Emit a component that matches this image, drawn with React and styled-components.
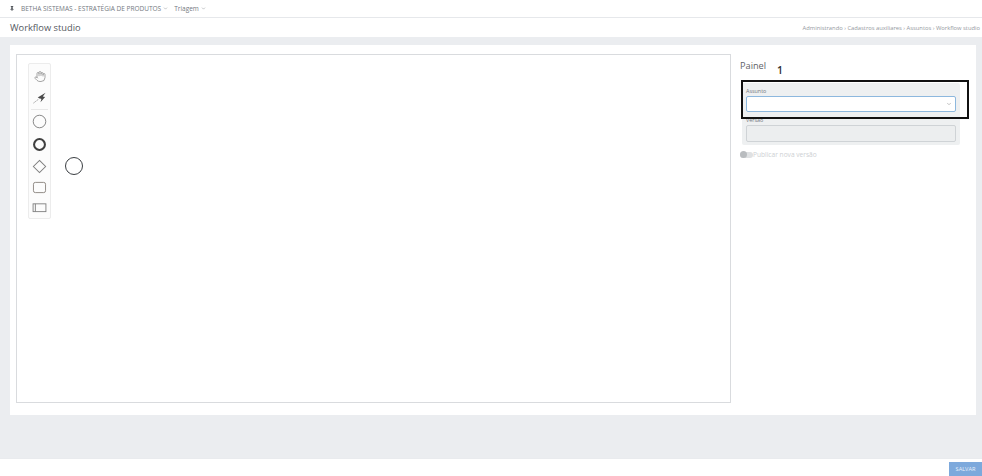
import styled, { createGlobalStyle } from "styled-components";
import { ChevronDown } from "lucide-react";

const Global = createGlobalStyle`
  html, body { margin: 0; padding: 0; height: 100%; }
  body { font-family: "Open Sans", "Liberation Sans", sans-serif; background: #ebedf0; }
  * { box-sizing: border-box; }
`;

const Page = styled.div`
  width: 982px;
  height: 476px;
  display: flex;
  flex-direction: column;
  overflow: hidden;
`;

const TopBar = styled.div`
  height: 18px;
  background: #fff;
  border-bottom: 1px solid #e6e8eb;
  display: flex;
  align-items: center;
  padding-left: 10px;
  gap: 6px;
  font-size: 6.5px;
  color: #74797f;
`;

const TopItem = styled.span`
  display: flex;
  align-items: center;
  gap: 2px;
`;

const Pin = styled.svg`
  width: 4px;
  height: 5px;
  margin-right: 1px;
`;

const Header = styled.div`
  height: 19px;
  background: #fff;
  display: flex;
  align-items: center;
  justify-content: space-between;
  padding: 0 2px 0 10px;
`;

const Title = styled.h1`
  margin: 0;
  font-size: 9.3px;
  font-weight: 400;
  color: #55595f;
`;

const Crumbs = styled.div`
  font-size: 5.8px;
  color: #93989e;
`;

const Main = styled.div`
  flex: 1;
  padding: 8px 6px 43px 10px;
  display: flex;
`;

const Card = styled.div`
  flex: 1;
  background: #fff;
  padding: 9px 8px 12px 6px;
  display: flex;
  gap: 9px;
  position: relative;
`;

const Canvas = styled.div`
  width: 715px;
  border: 1px solid #d9dbde;
  position: relative;
`;

const Palette = styled.div`
  position: absolute;
  left: 11px;
  top: 8px;
  width: 23px;
  height: 156px;
  background: #fcfcfc;
  border: 1px solid #ececec;
  border-radius: 2px;
  display: flex;
  flex-direction: column;
  align-items: center;
  padding-top: 3px;
`;

const Tool = styled.div`
  flex: none;
  height: ${(p) => p.$h || 22}px;
  display: flex;
  align-items: center;
  justify-content: center;
`;

const Divider = styled.div`
  flex: none;
  width: 17px;
  height: 1px;
  background: #e8e8e8;
`;

const StartNode = styled.div`
  position: absolute;
  left: 48px;
  top: 102px;
  width: 18px;
  height: 18px;
  border: 1.3px solid #3a3e42;
  border-radius: 50%;
`;

const Panel = styled.div`
  width: 228px;
  display: flex;
  flex-direction: column;
`;

const PanelHead = styled.div`
  height: 29px;
  display: flex;
  align-items: flex-start;
  padding-top: 5px;
  font-size: 9.2px;
  color: #5f6368;
`;

const Form = styled.div`
  width: 218px;
  margin-left: 2px;
  height: 62px;
  background: #eef0f1;
  border-radius: 2px;
  padding: 5px 4px 0 4px;
  display: flex;
  flex-direction: column;
`;

const Label = styled.label`
  font-size: 5.4px;
  line-height: 7px;
  color: #74797e;
  margin-bottom: 1px;
`;

const Select = styled.div`
  height: 16px;
  margin-bottom: 5px;
  background: #fff;
  border: 1px solid #8db8de;
  border-radius: 2px;
  display: flex;
  align-items: center;
  justify-content: flex-end;
  padding-right: 3px;
  color: #888;
`;

const Input = styled.div`
  height: 17px;
  background: #eceeef;
  border: 1px solid #cfd3d6;
  border-radius: 2px;
`;

const ToggleRow = styled.div`
  display: flex;
  align-items: center;
  gap: 0;
  margin-top: 5px;
  font-size: 6.6px;
  color: #cdd0d3;
`;

const Toggle = styled.div`
  width: 13px;
  height: 6px;
  border-radius: 3px;
  background: #dfe1e3;
  position: relative;
  &::before {
    content: "";
    position: absolute;
    left: 0;
    top: -0.5px;
    width: 7px;
    height: 7px;
    border-radius: 50%;
    background: #b9bcbf;
  }
`;

const Highlight = styled.div`
  position: absolute;
  left: 731px;
  top: 35px;
  width: 228px;
  height: 39px;
  border: 2px solid #111;
  pointer-events: none;
`;

const Marker = styled.span`
  position: absolute;
  left: 767px;
  top: 18px;
  font-size: 10.5px;
  font-weight: 600;
  color: #333;
`;

const Footer = styled.div`
  height: 18px;
  background: #fff;
  border-top: 1px solid #e9ebee;
  display: flex;
  justify-content: flex-end;
  align-items: flex-end;
`;

const SaveButton = styled.button`
  width: 33px;
  height: 14px;
  border: 0;
  padding: 0;
  background: #7da9dc;
  color: #e8f0fa;
  font-family: inherit;
  font-size: 5.6px;
`;

const Chevron = () => <ChevronDown size={5} strokeWidth={2} />;

const App = () => {
  return (
    <Page>
      <Global />
      <TopBar>
        <Pin viewBox="0 0 5 6">
          <path d="M1 0h3v1H3.4v2L4.5 4v.6H3V6H2V4.6H.5V4L1.6 3V1H1z" fill="#55595e" />
        </Pin>
        <TopItem>BETHA SISTEMAS - ESTRATÉGIA DE PRODUTOS <Chevron /></TopItem>
        <TopItem>Triagem <Chevron /></TopItem>
      </TopBar>
      <Header>
        <Title>Workflow studio</Title>
        <Crumbs>Administrando › Cadastros auxiliares › Assuntos › Workflow studio</Crumbs>
      </Header>
      <Main>
        <Card>
          <Canvas>
            <Palette>
              <Tool $h={19}>
                <svg width="12" height="13" viewBox="0 0 24 24" fill="none" stroke="#8a8a8a" strokeWidth="1.5" strokeLinecap="round" strokeLinejoin="round">
                  <path d="M18 11V6a2 2 0 0 0-4 0M14 10V4a2 2 0 0 0-4 0v2M10 10.500V6a2 2 0 0 0-4 0v8" />
                  <path d="M18 8a2 2 0 1 1 4 0v6a8 8 0 0 1-8 8h-2c-2.800 0-4.500-.86-5.990-2.340l-3.600-3.600a2 2 0 0 1 2.830-2.820L7 15" />
                </svg>
              </Tool>
              <Tool $h={23}>
                <svg width="14" height="13" viewBox="0 0 15 14" fill="none">
                  <path d="M0.500 13 L7 8" stroke="#777" strokeWidth="0.8" strokeDasharray="1.5 1" />
                  <path d="M5 7 L13.500 2 L10.500 6 L13 6.500 L8 12 L9 8.500 Z" fill="#4a4a4a" />
                </svg>
              </Tool>
              <Divider />
              <Tool $h={23}>
                <svg width="15" height="15" viewBox="0 0 16 16" fill="none">
                  <circle cx="8" cy="8" r="6.700" stroke="#808080" strokeWidth="1" />
                </svg>
              </Tool>
              <Tool>
                <svg width="15" height="15" viewBox="0 0 16 16" fill="none">
                  <circle cx="8" cy="8" r="5.800" stroke="#3f3f3f" strokeWidth="2.200" />
                </svg>
              </Tool>
              <Tool>
                <svg width="15" height="15" viewBox="0 0 16 16" fill="none">
                  <path d="M8 1.500 L14.500 8 L8 14.500 L1.500 8 Z" stroke="#808080" strokeWidth="1.100" />
                </svg>
              </Tool>
              <Tool $h={21}>
                <svg width="15" height="13" viewBox="0 0 16 14" fill="none">
                  <rect x="1.500" y="1.500" width="13" height="11" rx="2" stroke="#8b8580" strokeWidth="1" />
                </svg>
              </Tool>
              <Tool $h={19}>
                <svg width="15" height="11" viewBox="0 0 16 12" fill="none">
                  <rect x="1" y="2" width="14" height="8.500" stroke="#808080" strokeWidth="1" />
                  <path d="M3.500 2 V10.500" stroke="#808080" strokeWidth="1" />
                </svg>
              </Tool>
            </Palette>
            <StartNode />
          </Canvas>
          <Panel>
            <PanelHead>Painel</PanelHead>
            <Form>
              <Label>Assunto</Label>
              <Select><ChevronDown size={6} strokeWidth={2} /></Select>
              <Label>Versão</Label>
              <Input />
            </Form>
            <ToggleRow>
              <Toggle />
              Publicar nova versão
            </ToggleRow>
          </Panel>
          <Highlight />
          <Marker>1</Marker>
        </Card>
      </Main>
      <Footer>
        <SaveButton>SALVAR</SaveButton>
      </Footer>
    </Page>
  );
};

export default App;
